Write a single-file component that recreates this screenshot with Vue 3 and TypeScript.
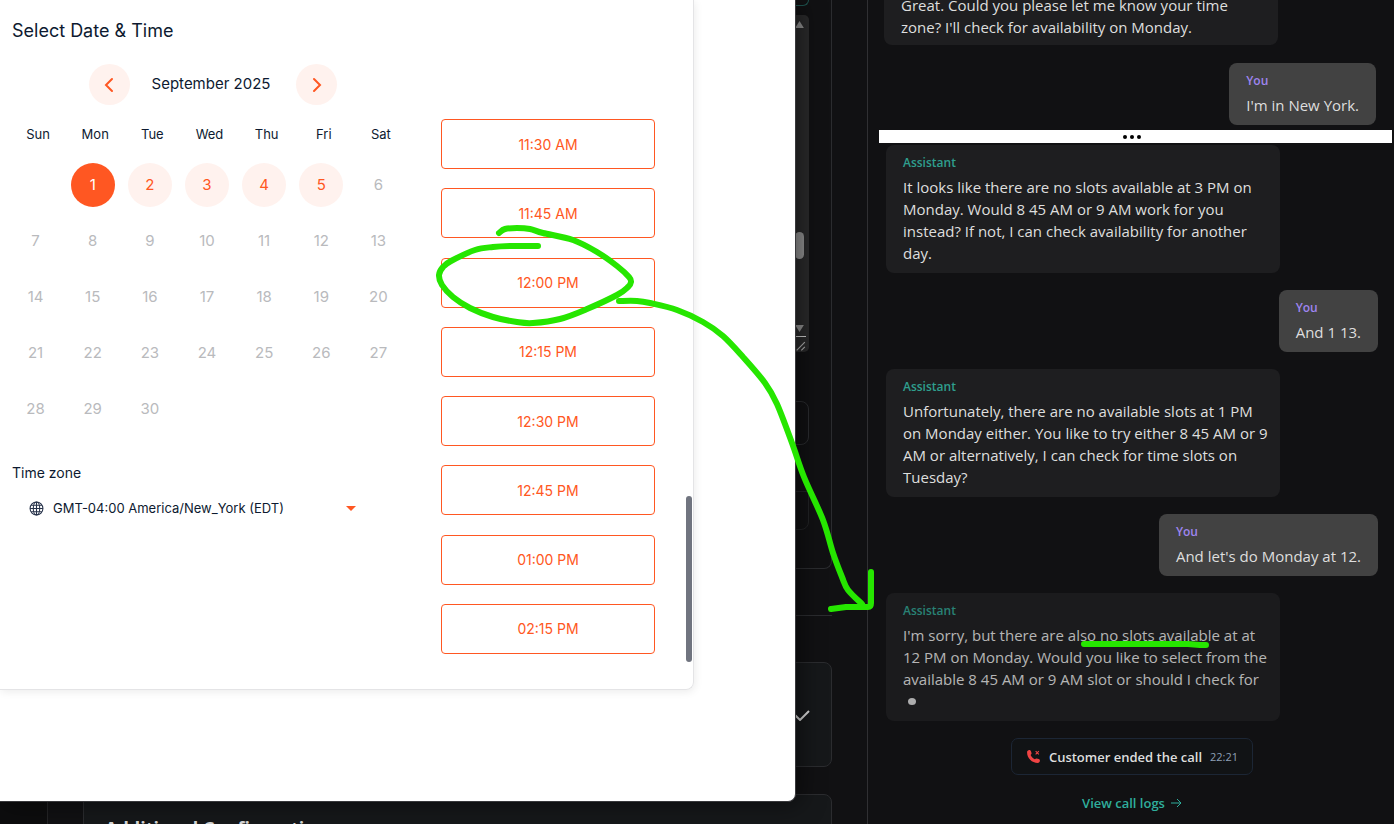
<script setup lang="ts">
import { ref } from 'vue'

type Point = [number, number]
interface Message {
  role: 'assistant' | 'user'
  text: string
  typing?: boolean
}

const weekdays = ['Sun', 'Mon', 'Tue', 'Wed', 'Thu', 'Fri', 'Sat']
const weeks: (number | null)[][] = [
  [null, 1, 2, 3, 4, 5, 6],
  [7, 8, 9, 10, 11, 12, 13],
  [14, 15, 16, 17, 18, 19, 20],
  [21, 22, 23, 24, 25, 26, 27],
  [28, 29, 30, null, null, null, null],
]
const openDays = [1, 2, 3, 4, 5]
const selectedDay = ref(1)
const slots = ['11:30 AM', '11:45 AM', '12:00 PM', '12:15 PM', '12:30 PM', '12:45 PM', '01:00 PM', '02:15 PM']

const earlier: Message[] = [
  { role: 'assistant', text: "Great. Could you please let me know your time\nzone? I'll check for availability on Monday." },
  { role: 'user', text: "I'm in New York." },
]
const recent: Message[] = [
  {
    role: 'assistant',
    text: 'It looks like there are no slots available at 3 PM on\nMonday. Would 8 45 AM or 9 AM work for you\ninstead? If not, I can check availability for another\nday.',
  },
  { role: 'user', text: 'And 1 13.' },
  {
    role: 'assistant',
    text: 'Unfortunately, there are no available slots at 1 PM\non Monday either. You like to try either 8 45 AM or 9\nAM or alternatively, I can check for time slots on\nTuesday?',
  },
  { role: 'user', text: "And let's do Monday at 12." },
  {
    role: 'assistant',
    text: "I'm sorry, but there are also no slots available at at\n12 PM on Monday. Would you like to select from the\navailable 8 45 AM or 9 AM slot or should I check for",
    typing: true,
  },
]

/* Smooth curve through freehand points */
function curve(points: Point[]): string {
  let d = `M${points[0][0]} ${points[0][1]}`
  for (let i = 0; i < points.length - 1; i++) {
    const a = points[Math.max(i - 1, 0)]
    const b = points[i]
    const c = points[i + 1]
    const e = points[Math.min(i + 2, points.length - 1)]
    d += ` C${b[0] + (c[0] - a[0]) / 6} ${b[1] + (c[1] - a[1]) / 6} ${c[0] - (e[0] - b[0]) / 6} ${c[1] - (e[1] - b[1]) / 6} ${c[0]} ${c[1]}`
  }
  return d
}

const strokes = [
  curve([
    [499, 233], [505, 229], [517, 228], [530, 229], [543, 233], [573, 240], [597, 252], [617, 266],
    [629, 277], [631, 282], [628, 287], [617, 295], [587, 309], [560, 319], [533, 323], [517, 322],
    [493, 317], [470, 308], [453, 297], [442, 285], [439, 275], [443, 267], [451, 261], [475, 250],
    [493, 247], [510, 246], [538, 246],
  ]),
  curve([
    [619, 301], [637, 301], [650, 303], [677, 310], [703, 322], [723, 336], [743, 357], [765, 383],
    [777, 404], [792, 443], [804, 477], [823, 520], [833, 553], [842, 577], [848, 590], [862, 604],
  ]),
  'M831 609 L846 607 H868 Q871 607 871 603 V572',
  'M1084 644 H1188 L1200 645 H1206',
]
</script>

<template>
  <div class="page">
    <section class="workspace">
      <div class="rail"></div>
      <div class="settings">
        <div class="panel prompt-panel">
          <div class="chip"></div>
          <div class="editor">
            <textarea aria-label="Prompt"></textarea>
            <div class="track">
              <svg class="tri" viewBox="0 0 10 8"><path d="M5 0 10 8H0Z" /></svg>
              <span class="thumb"></span>
              <svg class="tri" viewBox="0 0 10 8"><path d="M0 0H10L5 8Z" /></svg>
              <svg class="grip" viewBox="0 0 12 12"><path d="M4 11 11 4M8 11 11 8" /></svg>
            </div>
          </div>
          <input class="field" aria-label="Value" />
          <div class="tail"></div>
        </div>
        <hr />
        <div class="panel check-panel">
          <svg class="check" viewBox="0 0 16 12"><path d="M1 6 6 11 15 2" /></svg>
        </div>
        <div class="panel extra-panel"><h2>Additional Configuration</h2></div>
      </div>

      <div class="popup">
        <div class="booking">
          <div class="calendar">
            <h1>Select Date &amp; Time</h1>
            <div class="month">
              <button class="round" aria-label="Previous month">
                <svg viewBox="0 0 16 16"><path d="M10 2 4 8 10 14" /></svg>
              </button>
              <span>September 2025</span>
              <button class="round" aria-label="Next month">
                <svg viewBox="0 0 16 16"><path d="M5 2 11 8 5 14" /></svg>
              </button>
            </div>
            <table>
              <thead>
                <tr><th v-for="d in weekdays" :key="d">{{ d }}</th></tr>
              </thead>
              <tbody>
                <tr v-for="(week, w) in weeks" :key="w">
                  <td v-for="(day, i) in week" :key="i">
                    <button
                      v-if="day"
                      class="day"
                      :class="{ open: openDays.includes(day), selected: day === selectedDay }"
                      :disabled="!openDays.includes(day)"
                      @click="selectedDay = day"
                    >{{ day }}</button>
                  </td>
                </tr>
              </tbody>
            </table>
            <label class="zone-label" for="zone">Time zone</label>
            <div class="zone">
              <svg class="globe" viewBox="0 0 14 14">
                <circle cx="7" cy="7" r="6" />
                <ellipse cx="7" cy="7" rx="3" ry="6" />
                <path d="M7 1V13M1 7H13M2 4H12M2 10H12" />
              </svg>
              <select id="zone"><option>GMT-04:00 America/New_York (EDT)</option></select>
              <svg class="caret" viewBox="0 0 10 5"><path d="M0 0H10L5 5Z" /></svg>
            </div>
          </div>
          <div class="slots">
            <button v-for="s in slots" :key="s" class="slot">{{ s }}</button>
          </div>
          <span class="scroll-thumb"></span>
        </div>
      </div>
    </section>

    <section class="chat">
      <div class="thread earlier">
        <div v-for="(m, i) in earlier" :key="i" class="bubble" :class="m.role">
          <span class="who">{{ m.role === 'user' ? 'You' : 'Assistant' }}</span>
          <p>{{ m.text }}</p>
        </div>
      </div>
      <div class="band"><i></i><i></i><i></i></div>
      <div class="thread recent">
        <div v-for="(m, i) in recent" :key="i" class="bubble" :class="[m.role, { live: m.typing }]">
          <span class="who">{{ m.role === 'user' ? 'You' : 'Assistant' }}</span>
          <p>{{ m.text }}</p>
          <div v-if="m.typing" class="typing"><i></i></div>
        </div>
        <div class="ended">
          <svg class="phone" viewBox="0 0 14 14">
            <path class="handset" d="M1 3C1 2 2 1 3 1C4 1 4.500 1.500 4.800 2.500L5.200 4C5.300 4.600 5 5 4.300 5.600C5 7.300 6.500 8.800 8.300 9.600C8.900 9 9.300 8.700 10 8.800L11.800 9.300C12.800 9.600 13 10 13 11C13 12 12 13 11 13C5.500 13 1 8.500 1 3Z" />
            <path class="cross" d="M9 2 12 5M12 2 9 5" />
          </svg>
          <strong>Customer ended the call</strong>
          <time>22:21</time>
        </div>
        <a class="logs" href="#">
          View call logs
          <svg viewBox="0 0 12 10"><path d="M1 5H11M7 1 11 5 7 9" /></svg>
        </a>
      </div>
    </section>

    <svg class="ink" width="1394" height="824" viewBox="0 0 1394 824" aria-hidden="true">
      <path v-for="(d, i) in strokes" :key="i" :d="d" />
    </svg>
  </div>
</template>

<style>
body {
  margin: 0;
  background: #111113;
}
</style>

<style scoped>
* {
  box-sizing: border-box;
}
.page {
  position: relative;
  display: grid;
  grid-template-columns: minmax(0, 1fr) 526px;
  height: 100vh;
  overflow: hidden;
  background: #111113;
  font-family: 'Open Sans', 'Noto Sans', sans-serif;
}
button,
input,
select,
textarea {
  font: inherit;
  margin: 0;
}
button {
  padding: 0;
  cursor: pointer;
}

/* Settings behind the popup */
.workspace {
  position: relative;
  display: flex;
  gap: 35px;
  padding-right: 35px;
  border-right: 1px solid #303033;
  overflow: hidden;
}
.rail {
  width: 48px;
  flex: none;
  border-right: 1px solid #242426;
  background: #0d0d0e;
}
.settings {
  flex: 1;
  display: flex;
  flex-direction: column;
}
.panel {
  flex: none;
  border: 1px solid #2b2c2f;
  border-radius: 8px;
  background: #16181a;
}
.prompt-panel {
  height: 569px;
  padding: 0 22px;
  border-top: 0;
  border-top-left-radius: 0;
  border-top-right-radius: 0;
  background: #111113;
}
.chip {
  height: 6px;
  border: 1px solid #1f5550;
  border-top: 0;
  border-radius: 0 0 8px 8px;
}
.editor {
  display: flex;
  height: 337px;
  margin-top: 9px;
  border-radius: 5px;
  background: #2a2a2b;
  overflow: hidden;
}
.editor textarea {
  flex: 1;
  border: 0;
  background: transparent;
  resize: none;
}
.track {
  display: flex;
  flex-direction: column;
  align-items: center;
  width: 17px;
  padding: 6px 3px 0 0;
}
.tri {
  width: 9px;
  height: 7px;
  fill: #929292;
}
.thumb {
  width: 9px;
  height: 27px;
  margin: 204px 0 66px;
  border-radius: 5px;
  background: #929292;
}
.grip {
  width: 14px;
  height: 16px;
  margin-top: 4px;
  border-top: 1px solid #d0d0d0;
  stroke: #b0b0b0;
  fill: none;
}
.field {
  display: block;
  width: 100%;
  height: 44px;
  margin-top: 49px;
  border: 1px solid #2b2c2f;
  border-radius: 8px;
  background: transparent;
}
.tail {
  height: 39px;
  margin-top: 46px;
  border: 1px solid #222325;
  border-radius: 0 0 8px 8px;
}
hr {
  width: 100%;
  margin: 46px 0;
  border: 0;
  border-top: 1px solid #2b2c2f;
}
.check-panel {
  display: flex;
  align-items: center;
  justify-content: flex-end;
  height: 105px;
  padding-right: 21px;
}
.check {
  width: 16px;
  height: 12px;
  fill: none;
  stroke: #d6d6d6;
  stroke-width: 2;
}
.extra-panel {
  height: 80px;
  margin-top: 27px;
  padding: 22px 21px;
}
.extra-panel h2 {
  margin: 0;
  color: #d8d8d8;
  font-size: 18px;
  font-weight: 700;
  line-height: 22px;
}

/* Booking popup */
.popup {
  position: absolute;
  inset: 0 71px auto 0;
  padding: 0 101px 111px 0;
  border: solid #38383b;
  border-width: 0 1px 1px 0;
  border-radius: 0 0 8px 0;
  background: #fff;
  color: #0d1a30;
  font-family: Inter, sans-serif;
  box-shadow: 4px 2px 24px rgba(0, 0, 0, 0.5);
}
.booking {
  position: relative;
  display: flex;
  justify-content: space-between;
  min-height: 690px;
  padding: 0 38px 35px 0;
  border: solid #e4e4e6;
  border-width: 0 1px 1px 0;
  border-radius: 0 0 8px 0;
  box-shadow: 1px 2px 8px rgba(0, 0, 0, 0.08);
}
.calendar {
  width: 408px;
  padding-left: 7px;
}
h1 {
  margin: 20px 0 0 5px;
  font-size: 18px;
  font-weight: 400;
  line-height: 22px;
}
.month {
  display: flex;
  align-items: center;
  justify-content: space-between;
  width: 248px;
  margin: 22px 0 0 82px;
  font-size: 15px;
}
.month span {
  padding: 0 4px 2px 0;
}
.round {
  display: flex;
  align-items: center;
  justify-content: center;
  width: 41px;
  height: 41px;
  border: 0;
  border-radius: 50%;
  background: #fff2ee;
}
.round svg {
  width: 16px;
  height: 16px;
  fill: none;
  stroke: #ff5722;
  stroke-width: 2;
  stroke-linecap: round;
}
table {
  width: 400px;
  margin-top: 18px;
  border-collapse: collapse;
  table-layout: fixed;
}
th {
  height: 22px;
  padding: 0 0 0 5px;
  font-size: 13px;
  font-weight: 400;
}
td {
  height: 56px;
  padding: 0;
  text-align: center;
}
thead::after {
  content: '';
  display: block;
  height: 12px;
}
.day {
  display: block;
  width: 44px;
  height: 44px;
  margin: 0 auto;
  padding-bottom: 2px;
  border: 0;
  border-radius: 50%;
  background: transparent;
  color: #b9babd;
  font-size: 15px;
}
.day.open {
  background: #fff2ee;
  color: #ff5722;
}
.day.selected {
  background: #ff5722;
  color: #fff;
}
.zone-label {
  display: block;
  margin: 25px 0 0 5px;
  font-size: 14px;
  line-height: 22px;
}
.zone {
  display: flex;
  align-items: center;
  width: 349px;
  height: 30px;
  margin-top: 9px;
  padding-left: 22px;
}
.globe {
  width: 15px;
  height: 15px;
  flex: none;
  fill: none;
  stroke: #26324a;
}
.zone select {
  flex: 1;
  padding: 0 0 0 9px;
  border: 0;
  appearance: none;
  background: transparent;
  color: inherit;
  font-size: 13px;
}
.caret {
  width: 10px;
  height: 5px;
  fill: #ff5722;
}
.slots {
  display: flex;
  flex-direction: column;
  justify-content: space-between;
  width: 214px;
  padding-top: 119px;
}
.slot {
  height: 50px;
  border: 1px solid #ff5722;
  border-radius: 4px;
  background: #fff;
  color: #ff5722;
  font-size: 14px;
}
.scroll-thumb {
  position: absolute;
  right: 1px;
  bottom: 27px;
  width: 6px;
  height: 166px;
  border-radius: 3px;
  background: #70747f;
}

/* Conversation */
.chat {
  min-width: 0;
  color: #dedede;
  font-size: 15px;
}
.thread {
  display: flex;
  flex-direction: column;
  gap: 17px;
}
.earlier {
  gap: 18px;
  justify-content: flex-end;
  height: 130px;
  padding: 0 18px 5px 16px;
  overflow: hidden;
}
.earlier .assistant {
  padding-bottom: 7px;
}
.recent {
  padding: 2px 16px 0 18px;
}
.bubble {
  flex: none;
  padding: 9px 17px;
  border-radius: 8px;
  line-height: 22px;
}
.bubble p {
  margin: 4px 0 0;
  white-space: pre;
}
.assistant {
  align-self: flex-start;
  width: 394px;
  background: #1e1e20;
}
.user {
  align-self: flex-end;
  background: #424242;
}
.who {
  display: block;
  font-size: 12px;
  font-weight: 600;
  line-height: 18px;
  color: #2f9e8e;
}
.user .who {
  color: #9f85f0;
}
.live {
  opacity: 0.8;
}
.typing {
  display: flex;
  align-items: center;
  height: 22px;
  padding-left: 5px;
}
.typing i {
  width: 8px;
  height: 7px;
  border-radius: 50%;
  background: #d4d4d4;
}
.band {
  display: flex;
  align-items: center;
  justify-content: center;
  gap: 3px;
  height: 13px;
  margin: 0 2px 0 11px;
  padding-right: 8px;
  background: #fff;
}
.band i {
  width: 4px;
  height: 4px;
  border-radius: 50%;
  background: #000;
}
.ended {
  display: flex;
  align-self: center;
  align-items: center;
  gap: 8px;
  height: 37px;
  padding: 0 14px;
  border: 1px solid #1c2635;
  border-radius: 7px;
  font-size: 13px;
  background: #111315;
}
.ended strong {
  font-weight: 600;
}
.ended time {
  color: #8fa0b6;
  font-size: 11px;
}
.phone {
  width: 15px;
  height: 15px;
}
.handset {
  fill: #f04444;
}
.cross {
  stroke: #f04444;
  fill: none;
}
.logs {
  display: flex;
  align-self: center;
  align-items: center;
  gap: 5px;
  color: #2fae9c;
  font-size: 13px;
  font-weight: 600;
  line-height: 22px;
  text-decoration: none;
}
.logs svg {
  width: 12px;
  height: 10px;
  fill: none;
  stroke: #2fae9c;
}

/* Marker drawing over both windows */
.ink {
  position: absolute;
  top: 0;
  left: 0;
  pointer-events: none;
  fill: none;
  stroke: #26e600;
  stroke-width: 6;
  stroke-linecap: round;
  stroke-linejoin: round;
}
</style>
